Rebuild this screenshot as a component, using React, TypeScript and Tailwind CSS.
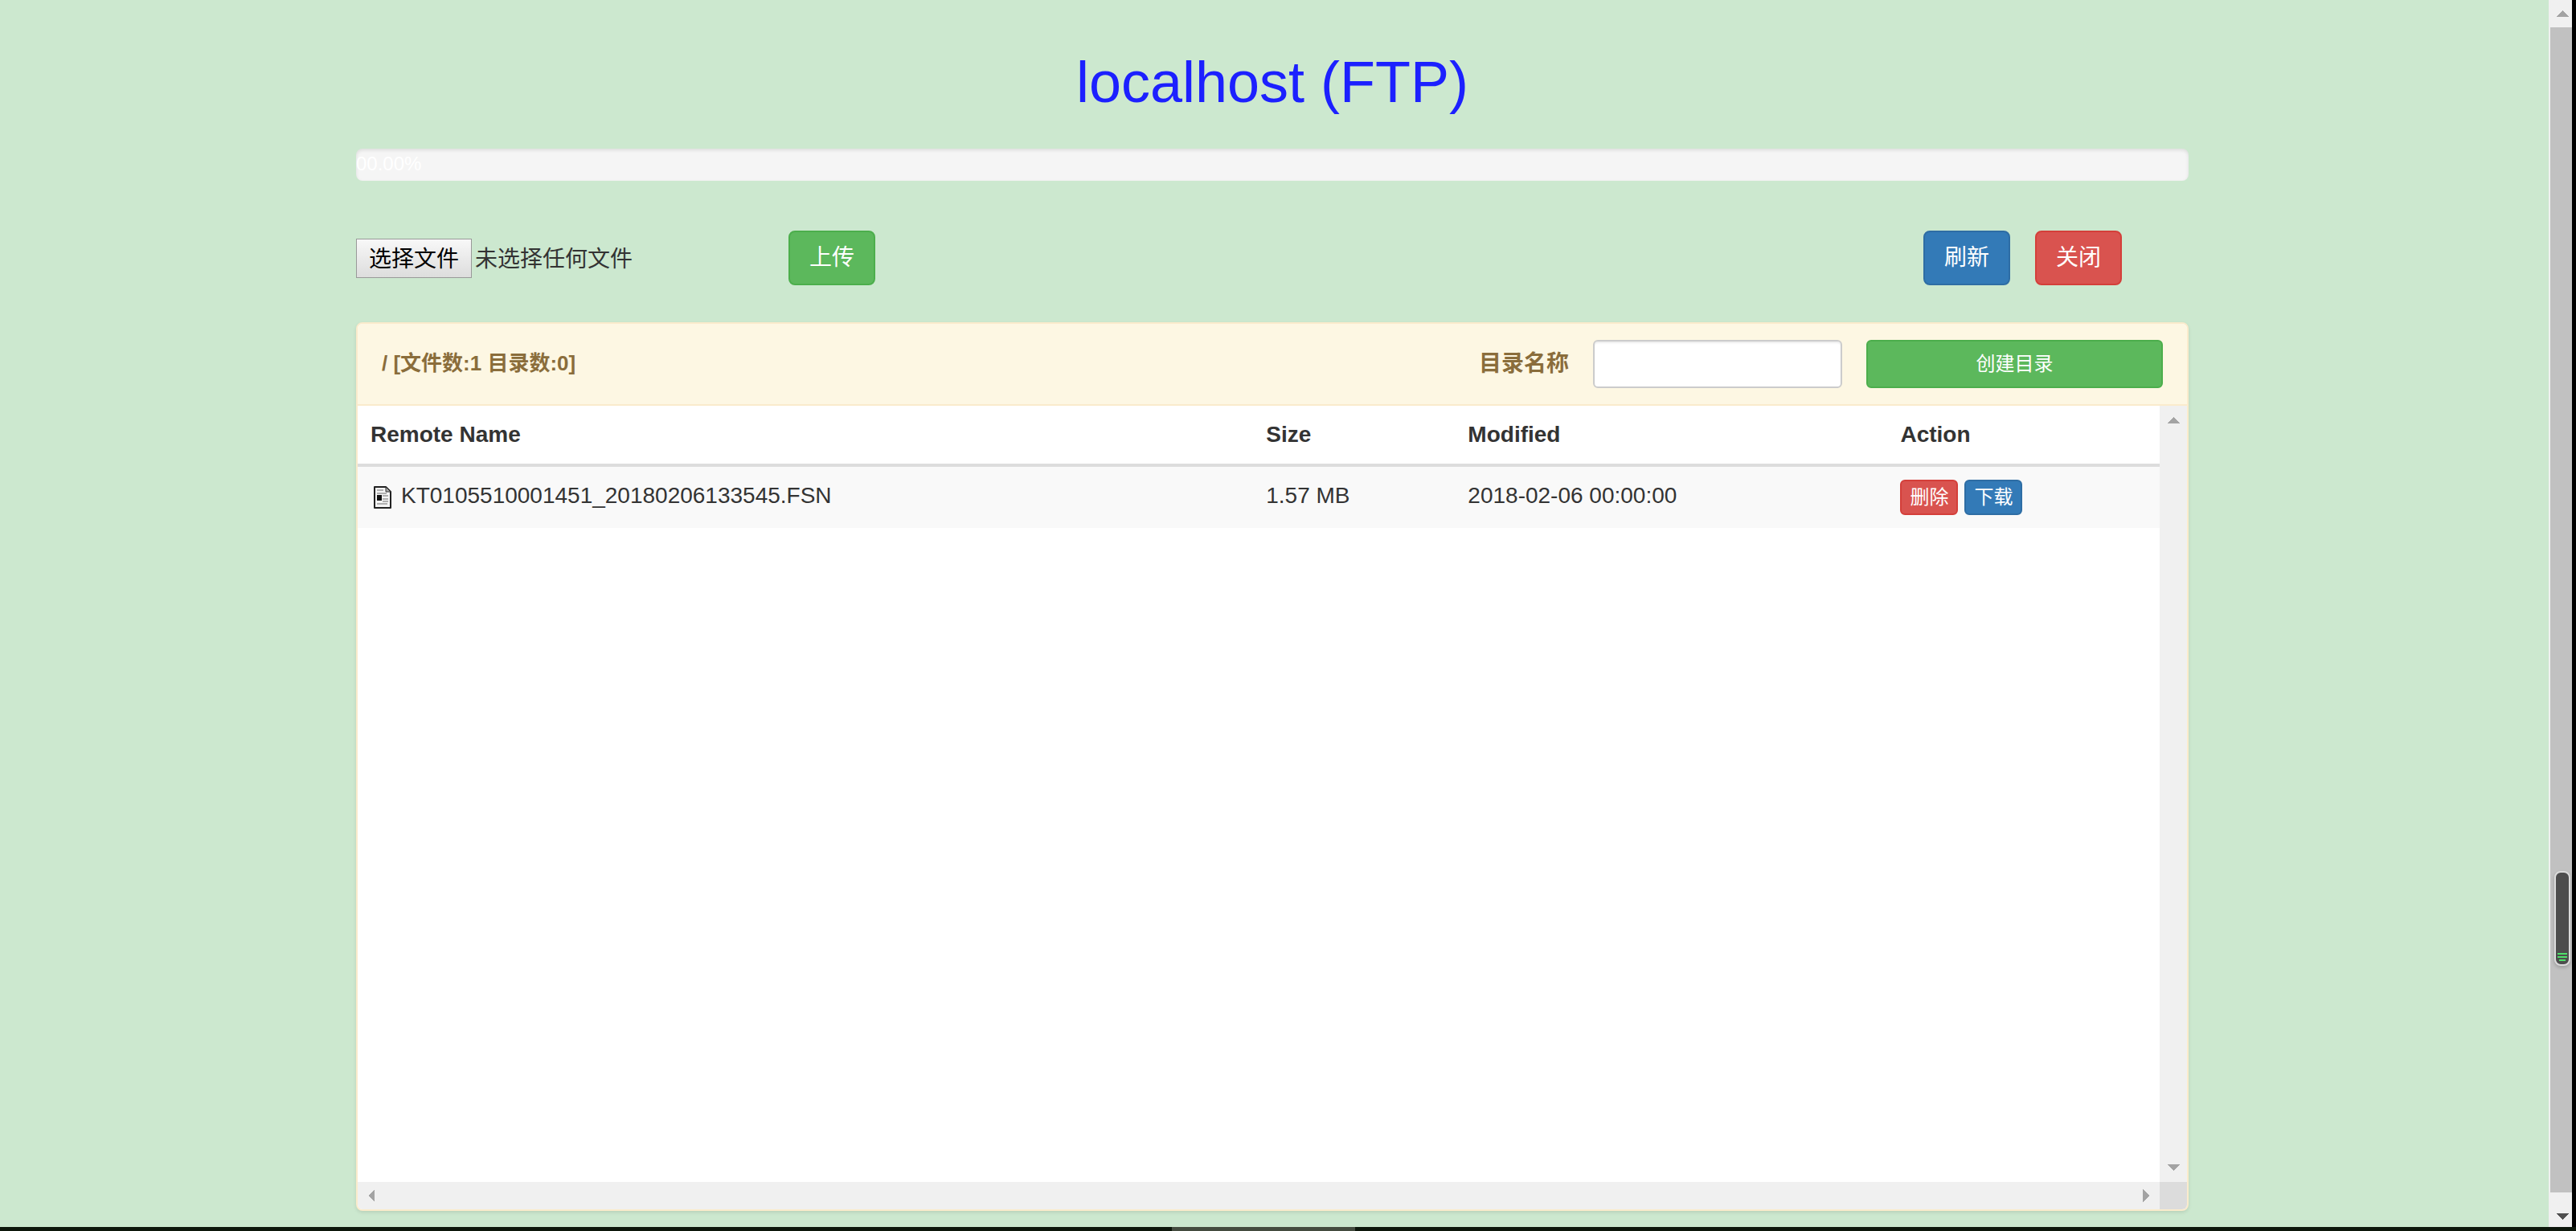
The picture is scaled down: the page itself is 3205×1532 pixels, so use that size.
import React from "react";

type IconProps = { className?: string };

function Arrow({ points, className }: { points: string } & IconProps) {
  return (
    <svg viewBox="0 0 16 16" className={className} width="16" height="16" fill="currentColor" shapeRendering="crispEdges" aria-hidden="true">
      <polygon points={points} />
    </svg>
  );
}

const UP = "0,12 8,4 16,12";
const DOWN = "0,4 8,12 16,4";
const LEFT = "12,0 4,8 12,16";
const RIGHT = "4,0 12,8 4,16";

function FileIcon() {
  return (
    <svg width="22" height="28" viewBox="0 0 22 28" aria-hidden="true" className="mt-2 shrink-0">
      <path d="M1 1h14l6 6v20H1z" fill="#f4f4f4" stroke="#222" strokeWidth="2" strokeLinejoin="round" />
      <path d="M15 1v6h6z" fill="#aaa" stroke="#333" strokeWidth="1" />
      <path d="M4 5h8M4 9h12M11 12h7M11 16h7M11 19h7M4 22h13" stroke="#999" strokeWidth="1.4" />
      <path d="M4 11h6v7H4z" fill="#111" />
    </svg>
  );
}

const btn = "inline-flex items-center justify-center rounded-lg border-2 text-white";
const green = "border-[#4cae4c] bg-[#5cb85c]";
const blue = "border-[#2e6da4] bg-[#337ab7]";
const red = "border-[#d43f3a] bg-[#d9534f]";
const large = "px-6 py-3 text-[28px] leading-10";
const small = "rounded-md px-[10px] py-[2px] text-2xl leading-9";
const headCell = "border-b-4 border-[#ddd] px-4 py-4";
const bodyCell = "px-4 pt-4 align-top";

const files = [{ name: "KT0105510001451_20180206133545.FSN", size: "1.57 MB", modified: "2018-02-06 00:00:00" }];

export default function App() {
  return (
    <div className="flex h-screen flex-col overflow-hidden bg-black font-['Liberation_Sans','Noto_Sans_CJK_SC',sans-serif] text-[28px] leading-10 text-[#333]">
      <div className="flex min-h-0 flex-1 pr-[5px]">
        <main className="flex min-w-0 flex-1 flex-col bg-[#cce8cf] pr-[5px] pb-5">
          <div className="mx-auto flex min-h-0 w-full max-w-[2280px] flex-1 flex-col">
            <h1 className="mt-[62px] text-center text-[72px] leading-[80px] text-[#1c20ff]">localhost (FTP)</h1>

            <div
              role="progressbar"
              aria-valuenow={0}
              aria-label="上传进度"
              className="mt-[43px] h-10 shrink-0 rounded-lg bg-[#f5f5f5] text-2xl leading-[38px] text-white shadow-[inset_0_2px_4px_rgba(0,0,0,0.1)]"
            >
              00.00%
            </div>

            <div className="mt-[62px] flex items-center">
              <label className="flex w-[538px] cursor-pointer items-center gap-1">
                <input type="file" className="sr-only" />
                <span className="border border-[#999] bg-linear-to-b from-[#f8f8f8] to-[#dddddd] px-[15px] pt-[5px] pb-[2px] text-black">选择文件</span>
                <span className="pt-[3px]">未选择任何文件</span>
              </label>
              <button type="button" className={`${btn} ${green} ${large}`}>上传</button>
              <div className="mr-[83px] ml-auto flex gap-[31px]">
                <button type="button" className={`${btn} ${blue} ${large}`}>刷新</button>
                <button type="button" className={`${btn} ${red} ${large}`}>关闭</button>
              </div>
            </div>

            <section className="mt-[46px] flex min-h-0 flex-1 flex-col overflow-hidden rounded-lg border-2 border-[#faebcc] bg-white shadow-[0_2px_4px_rgba(0,0,0,0.1)]">
              <header className="flex items-center border-b-2 border-[#faebcc] bg-[#fdf7e3] px-[30px] py-5 text-[#8a6d3b]">
                <h2 className="pb-[2px] text-[26px] leading-10 font-bold">/ [文件数:1 目录数:0]</h2>
                <label htmlFor="dir" className="ml-auto font-bold">目录名称</label>
                <input id="dir" type="text" className="ml-[30px] h-[60px] w-[310px] rounded-md border-2 border-[#ccc] bg-white px-5 text-2xl text-[#555] shadow-[inset_0_2px_2px_rgba(0,0,0,0.075)]" />
                <button type="button" className={`${btn} ${green} ml-[30px] h-[60px] w-[369px] rounded-md text-2xl`}>创建目录</button>
              </header>

              <div className="flex min-h-0 flex-1">
                <div className="min-w-0 flex-1">
                  <table className="w-full table-fixed border-separate border-spacing-0 text-left">
                    <colgroup>
                      <col className="w-[49.7%]" />
                      <col className="w-[11.2%]" />
                      <col className="w-[24%]" />
                      <col />
                    </colgroup>
                    <thead>
                      <tr>
                        <th className={headCell}>Remote Name</th>
                        <th className={headCell}>Size</th>
                        <th className={headCell}>Modified</th>
                        <th className={headCell}>Action</th>
                      </tr>
                    </thead>
                    <tbody>
                      {files.map((file) => (
                        <tr key={file.name} className="h-[76px] bg-[#f9f9f9]">
                          <td className={bodyCell}>
                            <span className="flex items-start gap-3 pl-1">
                              <FileIcon />
                              {file.name}
                            </span>
                          </td>
                          <td className={bodyCell}>{file.size}</td>
                          <td className={bodyCell}>{file.modified}</td>
                          <td className={bodyCell}>
                            <span className="flex gap-2">
                              <button type="button" className={`${btn} ${red} ${small}`}>删除</button>
                              <button type="button" className={`${btn} ${blue} ${small}`}>下载</button>
                            </span>
                          </td>
                        </tr>
                      ))}
                    </tbody>
                  </table>
                </div>
                <div className="flex w-[34px] flex-col items-center justify-between bg-[#f0f0f0] py-[10px] text-[#a3a3a3]">
                  <Arrow points={UP} />
                  <Arrow points={DOWN} />
                </div>
              </div>
              <div className="flex h-[34px] shrink-0 text-[#a3a3a3]">
                <div className="flex flex-1 items-center justify-between bg-[#f0f0f0] px-[9px]">
                  <Arrow points={LEFT} />
                  <Arrow points={RIGHT} />
                </div>
                <div className="w-[34px] bg-[#dcdcdc]" />
              </div>
            </section>
          </div>
        </main>

        <aside className="flex w-[29px] flex-col bg-[#f0f0f0] pl-[2px]">
          <div className="flex h-[34px] items-center justify-center pl-[3px] text-[#a3a3a3]">
            <Arrow points={UP} />
          </div>
          <div className="relative flex-1 bg-[#c1c1c1]">
            <div className="absolute top-[1050px] left-[5px] flex h-[118px] w-5 flex-col items-center justify-end gap-[2px] rounded-lg border-2 border-[#dcdcdc] bg-[#4d4d4d] pb-1 shadow-[0_2px_4px_rgba(0,0,0,0.2)]">
              <div className="h-[2px] w-3 bg-[#4fe06a]" />
              <div className="h-[2px] w-3 bg-[#4fe06a]" />
              <div className="h-[2px] w-2 bg-[#4fe06a]" />
            </div>
          </div>
          <div className="flex h-[43px] items-end justify-center pb-[5px] pl-[3px] text-[#505050]">
            <Arrow points={DOWN} />
          </div>
        </aside>
      </div>
      <footer className="flex h-[5px] bg-[#0d170b]">
        <div className="w-[45.5%]" />
        <div className="w-[7.1%] bg-[#444c3f]" />
      </footer>
    </div>
  );
}
